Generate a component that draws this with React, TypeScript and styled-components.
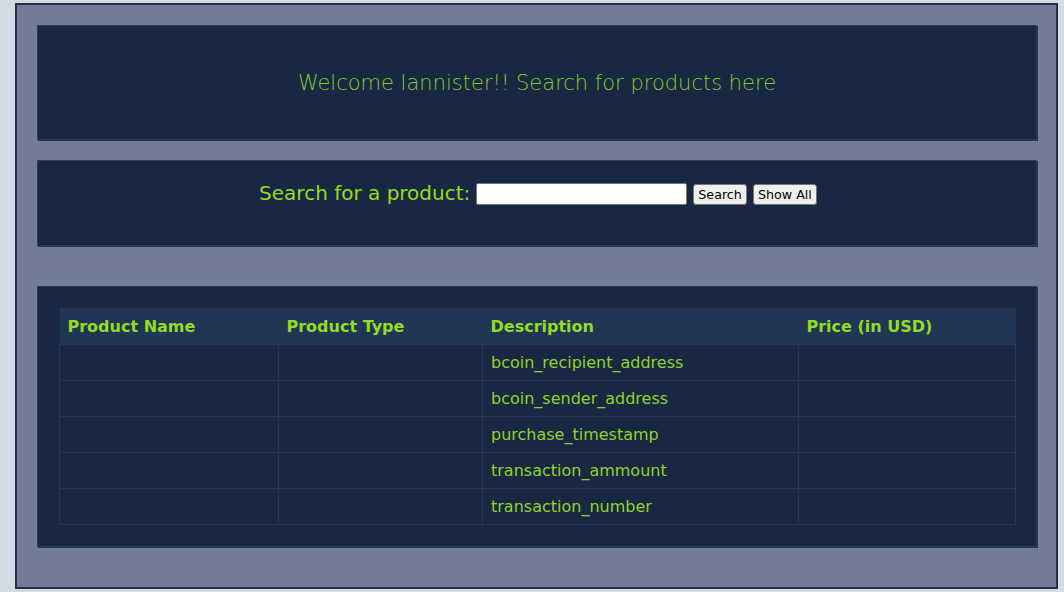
import React from "react";
import styled, { createGlobalStyle } from "styled-components";

const Global = createGlobalStyle`
  html, body { margin: 0; padding: 0; background: #d6dbe3; }
  body { font-family: "DejaVu Sans", sans-serif; }
`;

const Page = styled.div`
  padding: 3px 6px 3px 15px;
`;

const Frame = styled.div`
  box-sizing: border-box;
  width: 1043px;
  height: 586px;
  background: #737d96;
  border: 2px solid #1f3052;
  padding: 20px 19px 20px 20px;
  display: flex;
  flex-direction: column;
`;

const Panel = styled.section<{ $h: number; $mb: number }>`
  box-sizing: border-box;
  height: ${(p) => p.$h}px;
  margin-bottom: ${(p) => p.$mb}px;
  background: #1a2742;
  border: 1px solid #2b3c5d;
  box-shadow: 1px 1px 0 #22324f;
`;

const Hero = styled(Panel)`
  display: flex;
  align-items: center;
  justify-content: center;
`;

const Title = styled.h1`
  margin: 0;
  font-weight: 200;
  font-size: 21px;
  color: #7fcf2e;
`;

const SearchPanel = styled(Panel)`
  display: flex;
  justify-content: center;
  align-items: flex-start;
  padding: 20px 0 0 8px;
`;

const Label = styled.label`
  font-size: 20px;
  color: #93dd22;
  margin-right: 6px;
  line-height: 24px;
`;

const Input = styled.input`
  box-sizing: border-box;
  width: 211px;
  height: 22px;
  margin: 2px 6px 0 0;
  border: 1px solid #767676;
  border-radius: 2px;
  background: #fff;
`;

const Button = styled.button`
  box-sizing: border-box;
  height: 21px;
  margin: 3px 6px 0 0;
  padding: 0 4px;
  font-family: "DejaVu Sans", sans-serif;
  font-size: 12.7px;
  color: #000;
  background: #efefef;
  border: 1px solid #767676;
  border-radius: 3px;
`;

const TablePanel = styled(Panel)`
  padding: 21px 21px 0 21px;
`;

const Table = styled.table`
  width: 956px;
  border-collapse: collapse;
  table-layout: fixed;
`;

const Th = styled.th`
  box-sizing: border-box;
  height: 36px;
  padding: 1px 0 0 8px;
  text-align: left;
  background: #213555;
  color: #93dd22;
  font-size: 16px;
  font-weight: bold;
`;

const Td = styled.td`
  height: 35px;
  padding: 0 0 0 8px;
  border: 1px solid #24365a;
  color: #8fd42a;
  font-size: 16px;
`;

const cols = [
  { name: "Product Name", w: 219 },
  { name: "Product Type", w: 204 },
  { name: "Description", w: 316 },
  { name: "Price (in USD)", w: 217 },
];

const rows = [
  "bcoin_recipient_address",
  "bcoin_sender_address",
  "purchase_timestamp",
  "transaction_ammount",
  "transaction_number",
];

export default function App() {
  return (
    <>
      <Global />
      <Page>
        <Frame>
          <Hero $h={115} $mb={20}>
            <Title>Welcome lannister!! Search for products here</Title>
          </Hero>
          <SearchPanel $h={86} $mb={40}>
            <Label>Search for a product:</Label>
            <Input type="text" />
            <Button>Search</Button>
            <Button>Show All</Button>
          </SearchPanel>
          <TablePanel $h={261} $mb={0}>
            <Table>
              <colgroup>
                {cols.map((c) => (
                  <col key={c.name} style={{ width: c.w }} />
                ))}
              </colgroup>
              <thead>
                <tr>
                  {cols.map((c) => (
                    <Th key={c.name}>{c.name}</Th>
                  ))}
                </tr>
              </thead>
              <tbody>
                {rows.map((r) => (
                  <tr key={r}>
                    <Td />
                    <Td />
                    <Td>{r}</Td>
                    <Td />
                  </tr>
                ))}
              </tbody>
            </Table>
          </TablePanel>
        </Frame>
      </Page>
    </>
  );
}
